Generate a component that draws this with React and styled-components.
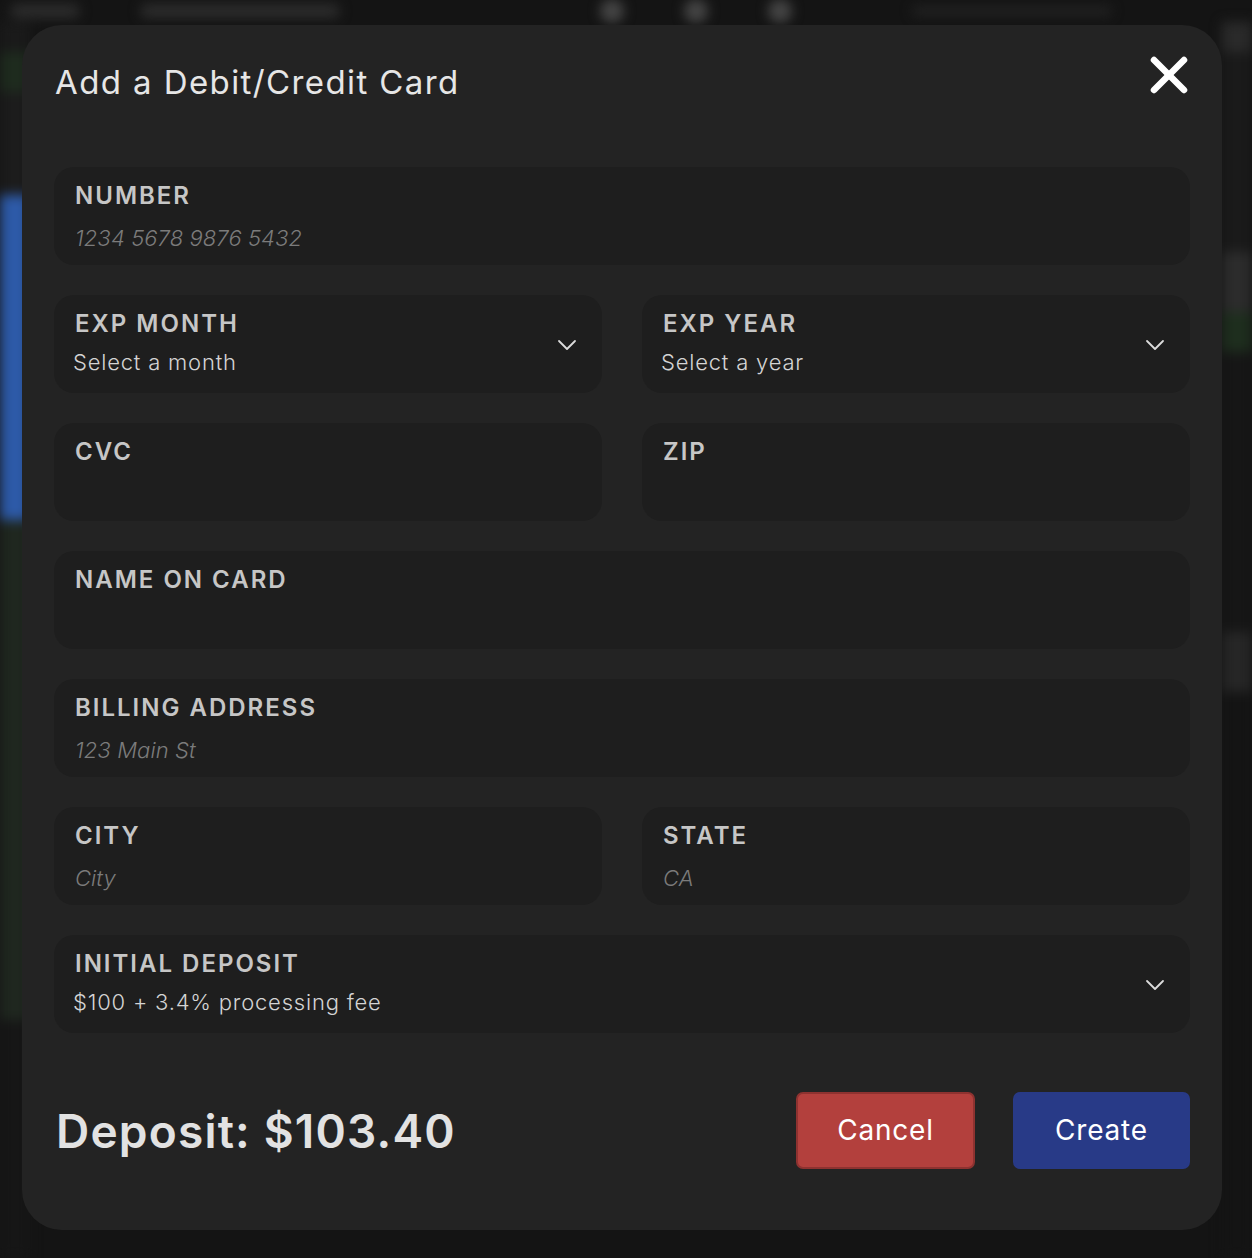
import styled, { createGlobalStyle } from 'styled-components';

const GlobalStyle = createGlobalStyle`
    html, body {
        margin: 0;
        padding: 0;
        background: #141414;
        font-family: Inter, "Noto Sans", sans-serif;
    }
    * {
        box-sizing: border-box;
    }
`;

// blurred app behind the modal
const Page = styled.div`
    position: relative;
    width: 1252px;
    height: 1258px;
    overflow: hidden;
`;
const Backdrop = styled.div`
    position: absolute;
    inset: 0;
    display: flex;
    flex-direction: column;
    filter: blur(6px);
`;
const TopBar = styled.div`
    height: 22px;
    display: flex;
    align-items: center;
    gap: 60px;
    padding: 0 10px;
`;
const Blob = styled.div`
    width: ${(p) => p.$w}px;
    height: ${(p) => p.$h}px;
    border-radius: ${(p) => p.$h}px;
    background: ${(p) => p.$color || '#3a3a3a'};
    margin-left: ${(p) => p.$ml || 0}px;
`;
const BackBody = styled.div`
    flex: 1;
    display: flex;
    justify-content: space-between;
`;
const SideStrip = styled.div`
    width: 30px;
    display: flex;
    flex-direction: column;
`;
const StripPart = styled.div`
    height: ${(p) => p.$h}px;
    background: ${(p) => p.$color};
`;

// modal
const Modal = styled.div`
    position: relative;
    margin: 25px 0 0 22px;
    width: 1200px;
    height: 1205px;
    background: #232323;
    border-radius: 40px;
    padding: 0 32px;
    display: flex;
    flex-direction: column;
`;
const Header = styled.div`
    height: 142px;
    display: flex;
    justify-content: space-between;
    align-items: flex-start;
`;
const Title = styled.h2`
    margin: 37px 0 0 1px;
    font-size: 33px;
    font-weight: 400;
    color: #e6e6e6;
    letter-spacing: 1.4px;
`;
const CloseButton = styled.button`
    margin: 30px 1px 0 0;
    background: none;
    border: none;
    padding: 0;
    width: 40px;
    height: 40px;
    cursor: pointer;
    display: flex;
`;
const Form = styled.div`
    display: grid;
    grid-template-columns: 1fr 1fr;
    column-gap: 40px;
    row-gap: 30px;
`;
const Field = styled.div`
    grid-column: ${(p) => (p.$full ? '1 / span 2' : 'auto')};
    height: 98px;
    background: #1e1e1e;
    border-radius: 20px;
    padding: 14px 20px 0 21px;
    display: flex;
    align-items: center;
    gap: 12px;
`;
const FieldText = styled.div`
    flex: 1;
    display: flex;
    flex-direction: column;
    align-self: flex-start;
`;
const Label = styled.label`
    font-size: 24px;
    line-height: 30px;
    font-weight: 600;
    color: #c6c6c6;
    letter-spacing: 2px;
`;
const Value = styled.span`
    margin-top: ${(p) => (p.$select ? 9 : 13)}px;
    margin-left: ${(p) => (p.$select ? -2 : 0)}px;
    font-size: 22px;
    line-height: 28px;
    font-weight: 300;
    font-style: ${(p) => (p.$placeholder ? 'italic' : 'normal')};
    color: ${(p) => (p.$placeholder ? '#7b7b7b' : '#d4d4d4')};
    letter-spacing: ${(p) => (p.$placeholder ? 0.1 : 0.8)}px;
    min-height: 28px;
`;
const Chevron = styled.svg`
    width: 20px;
    height: 12px;
    margin-right: 5px;
    margin-top: -12px;
`;
const Footer = styled.div`
    flex: 1;
    display: flex;
    align-items: center;
    justify-content: space-between;
    padding-bottom: 3px;
`;
const Deposit = styled.div`
    font-size: 46px;
    font-weight: 600;
    color: #e2e2e2;
    margin-left: 2px;
    margin-top: 2px;
    letter-spacing: 1.2px;
`;
const Buttons = styled.div`
    display: flex;
    gap: 38px;
`;
const ActionButton = styled.button`
    height: 77px;
    width: ${(p) => p.$w}px;
    border-radius: 7px;
    border: 2px solid ${(p) => p.$border};
    background: ${(p) => p.$bg};
    color: #ffffff;
    font-family: Inter, "Noto Sans", sans-serif;
    font-size: 28px;
    font-weight: 400;
    letter-spacing: 0.8px;
    cursor: pointer;
`;

function ChevronDown() {
    return (
        <Chevron viewBox="0 0 20 12" fill="none">
            <polyline points="2,2 10,10 18,2" stroke="#dcdcdc" strokeWidth="1.8" strokeLinecap="round" strokeLinejoin="round" />
        </Chevron>
    );
}

function FormField({ label, value, placeholder, select, full }) {
    return (
        <Field $full={full}>
            <FieldText>
                <Label>{label}</Label>
                <Value $placeholder={placeholder} $select={select}>{value}</Value>
            </FieldText>
            {select && <ChevronDown />}
        </Field>
    );
}

export default function App() {
    return (
        <Page>
            <GlobalStyle />
            <Backdrop>
                <TopBar>
                    <Blob $w={70} $h={14} $color="#2c2c2c" />
                    <Blob $w={200} $h={14} $color="#2c2c2c" />
                    <Blob $w={24} $h={24} $color="#444" $ml={200} />
                    <Blob $w={24} $h={24} $color="#444" />
                    <Blob $w={24} $h={24} $color="#444" />
                    <Blob $w={200} $h={10} $color="#222" $ml={60} />
                </TopBar>
                <BackBody>
                    <SideStrip>
                        <StripPart $h={30} $color="#1a1a1a" />
                        <StripPart $h={40} $color="#1e2b1e" />
                        <StripPart $h={103} $color="#1c1c1c" />
                        <StripPart $h={325} $color="#2d5aa8" />
                        <StripPart $h={500} $color="#1f271f" />
                        <StripPart $h={238} $color="#161616" />
                    </SideStrip>
                    <SideStrip>
                        <StripPart $h={30} $color="#2a2a2a" />
                        <StripPart $h={200} $color="#1a1a1a" />
                        <StripPart $h={60} $color="#2c2c2c" />
                        <StripPart $h={40} $color="#1e2e1e" />
                        <StripPart $h={280} $color="#161616" />
                        <StripPart $h={60} $color="#262626" />
                        <StripPart $h={566} $color="#141414" />
                    </SideStrip>
                </BackBody>
            </Backdrop>
            <Modal>
                <Header>
                    <Title>Add a Debit/Credit Card</Title>
                    <CloseButton aria-label="Close">
                        <svg width="40" height="40" viewBox="0 0 40 40">
                            <line x1="5" y1="5" x2="35" y2="35" stroke="#fff" strokeWidth="6.5" strokeLinecap="round" />
                            <line x1="35" y1="5" x2="5" y2="35" stroke="#fff" strokeWidth="6.5" strokeLinecap="round" />
                        </svg>
                    </CloseButton>
                </Header>
                <Form>
                    <FormField full label="NUMBER" value="1234 5678 9876 5432" placeholder />
                    <FormField select label="EXP MONTH" value="Select a month" />
                    <FormField select label="EXP YEAR" value="Select a year" />
                    <FormField label="CVC" />
                    <FormField label="ZIP" />
                    <FormField full label="NAME ON CARD" />
                    <FormField full label="BILLING ADDRESS" value="123 Main St" placeholder />
                    <FormField label="CITY" value="City" placeholder />
                    <FormField label="STATE" value="CA" placeholder />
                    <FormField full select label="INITIAL DEPOSIT" value="$100 + 3.4% processing fee" />
                </Form>
                <Footer>
                    <Deposit>Deposit: $103.40</Deposit>
                    <Buttons>
                        <ActionButton $w={179} $bg="#b3403d" $border="#8e3230">Cancel</ActionButton>
                        <ActionButton $w={177} $bg="#283a87" $border="#283a87">Create</ActionButton>
                    </Buttons>
                </Footer>
            </Modal>
        </Page>
    );
}
